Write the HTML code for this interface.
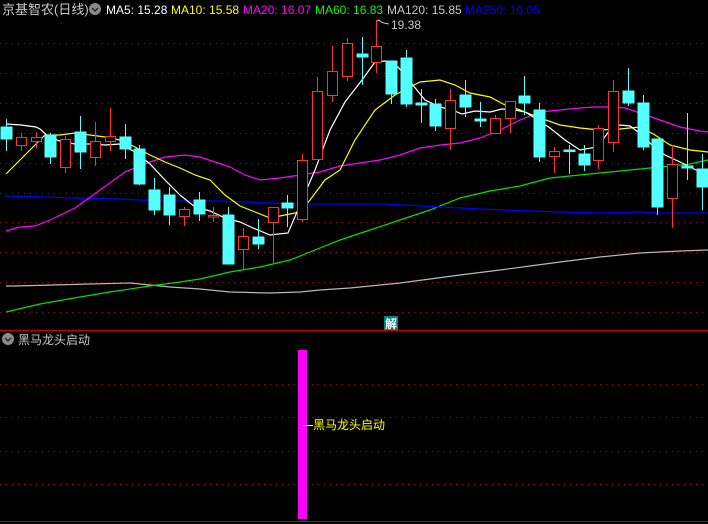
<!DOCTYPE html>
<html><head><meta charset="utf-8"><style>
html,body{margin:0;padding:0;background:#000;width:708px;height:524px;overflow:hidden}
svg{display:block}
text{font-family:"Liberation Sans","Noto Sans CJK SC",sans-serif}
</style></head><body>
<svg width="708" height="524" viewBox="0 0 708 524" xmlns="http://www.w3.org/2000/svg">
<rect width="708" height="524" fill="#000"/>
<g stroke="#8a1a1a" stroke-width="1" stroke-dasharray="1,5">
<line x1="0" y1="43.5" x2="708" y2="43.5"/><line x1="0" y1="73.5" x2="708" y2="73.5"/>
<line x1="0" y1="103.5" x2="708" y2="103.5"/><line x1="0" y1="133.5" x2="708" y2="133.5"/>
<line x1="0" y1="163.5" x2="708" y2="163.5"/><line x1="0" y1="193.5" x2="708" y2="193.5"/>
<line x1="0" y1="222.5" x2="708" y2="222.5"/><line x1="0" y1="252.5" x2="708" y2="252.5"/>
<line x1="0" y1="282.5" x2="708" y2="282.5"/><line x1="0" y1="312.5" x2="708" y2="312.5"/>
<line x1="0" y1="384.5" x2="708" y2="384.5"/><line x1="0" y1="417.5" x2="708" y2="417.5"/>
<line x1="0" y1="451.5" x2="708" y2="451.5"/><line x1="0" y1="484.5" x2="708" y2="484.5"/>
</g>
<line x1="0" y1="330.5" x2="708" y2="330.5" stroke="#c00000" stroke-width="1.5"/>
<line x1="0" y1="521.5" x2="708" y2="521.5" stroke="#c00000" stroke-width="1"/>

<g fill="none" stroke-width="1.2">
<polyline stroke="#b8b8b8" points="6,286 15,286 90,284 130,283 150,285 170,287 200,289 230,292 270,293 300,292 320,290 350,288 380,285 400,283 430,279 460,275 500,270 530,266 560,262 600,257 640,253 680,251 708,250"/>
<polyline stroke="#00e000" points="6,312 40,304 80,297 110,292 150,286 180,282 200,279 230,272 260,267 290,260 310,252 340,240 370,230 400,220 430,210 460,198 490,191 520,186 550,178 580,175 600,173 630,170 660,167 690,164 708,160"/>
<polyline stroke="#0000ff" points="6,196 45,197 75,198 120,199 160,201 220,201 270,203 300,204 385,204 440,207 480,209 530,211 560,212 600,213 640,212 660,213 708,213"/>
<polyline stroke="#ff00ff" points="6,231 20,227 35,226 50,220 75,208 100,190 125,172 150,162 165,157 185,155 200,157 215,162 230,167 245,175 260,180 280,178 300,175 320,172 340,166 360,163 380,160 400,155 420,148 440,145 460,143 480,138 500,130 520,120 540,112 560,110 580,108 595,107 610,107 625,108 640,113 660,120 680,127 700,131 708,132"/>
<polyline stroke="#ffff00" points="6,174 20,160 35,145 45,135 60,135 75,133 90,135 105,137 120,140 135,147 150,155 165,162 180,168 195,175 210,180 225,195 240,206 255,212 270,218 285,215 300,212 310,200 325,180 340,170 355,140 375,110 395,95 410,87 420,82 440,80 455,85 470,93 490,97 505,105 520,110 540,118 560,125 580,128 600,130 620,129 640,127 655,135 670,145 690,150 708,152"/>
<polyline stroke="#ffffff" points="6,124 21,125 36,127 40,129 50,138 60,141 75,144 90,144 105,145 120,144 135,152 150,164 165,180 180,195 195,207 210,211 225,218 240,222 253,228 270,235 288,233 300,205 315,170 330,130 345,102 362,80 375,62 385,61 398,67 412,84 425,100 440,107 452,110 462,114 475,111 490,112 502,109 515,110 525,112 535,118 550,128 565,140 580,150 597,147 610,130 620,125 630,126 642,135 655,148 665,155 680,162 700,172 708,175"/>
</g>

<g stroke-width="1">
<g stroke="#54ffff" fill="#54ffff">
<line x1="6.5" y1="119" x2="6.5" y2="151"/><rect x="1" y="127" width="11" height="12"/>
<line x1="50.5" y1="133" x2="50.5" y2="164"/><rect x="45" y="135" width="11" height="22"/>
<line x1="80.5" y1="116" x2="80.5" y2="169"/><rect x="75" y="132" width="11" height="20"/>
<line x1="125.5" y1="124" x2="125.5" y2="159"/><rect x="120" y="137" width="11" height="12"/>
<line x1="139.5" y1="145" x2="139.5" y2="185"/><rect x="134" y="149" width="11" height="35"/>
<line x1="154.5" y1="178" x2="154.5" y2="215"/><rect x="149" y="190" width="11" height="20"/>
<line x1="169.5" y1="187" x2="169.5" y2="225"/><rect x="164" y="195" width="11" height="20"/>
<line x1="199.5" y1="192" x2="199.5" y2="221"/><rect x="194" y="200" width="11" height="14"/>
<line x1="228.5" y1="207" x2="228.5" y2="264"/><rect x="223" y="215" width="11" height="49"/>
<line x1="258.5" y1="219" x2="258.5" y2="249"/><rect x="253" y="237" width="11" height="7"/>
<line x1="287.5" y1="195" x2="287.5" y2="227"/><rect x="282" y="203" width="11" height="5"/>
<line x1="362.5" y1="37" x2="362.5" y2="85"/><rect x="357" y="54" width="11" height="3"/>
<line x1="391.5" y1="61" x2="391.5" y2="104"/><rect x="386" y="61" width="11" height="33"/>
<line x1="406.5" y1="50" x2="406.5" y2="107"/><rect x="401" y="58" width="11" height="46"/>
<line x1="421.5" y1="89" x2="421.5" y2="123"/><rect x="416" y="103" width="11" height="2"/>
<line x1="435.5" y1="99" x2="435.5" y2="131"/><rect x="430" y="104" width="11" height="22"/>
<line x1="465.5" y1="80" x2="465.5" y2="117"/><rect x="460" y="95" width="11" height="12"/>
<line x1="480.5" y1="102" x2="480.5" y2="127"/><rect x="475" y="119" width="11" height="2"/>
<line x1="524.5" y1="76" x2="524.5" y2="115"/><rect x="519" y="96" width="11" height="7"/>
<line x1="539.5" y1="103" x2="539.5" y2="162"/><rect x="534" y="110" width="11" height="47"/>
<line x1="569.5" y1="145" x2="569.5" y2="174"/><rect x="564" y="150" width="11" height="1.5"/>
<line x1="584.5" y1="145" x2="584.5" y2="171"/><rect x="579" y="154" width="11" height="11"/>
<line x1="628.5" y1="68" x2="628.5" y2="106"/><rect x="623" y="91" width="11" height="12"/>
<line x1="643.5" y1="95" x2="643.5" y2="150"/><rect x="638" y="103" width="11" height="44"/>
<line x1="657.5" y1="139" x2="657.5" y2="215"/><rect x="652" y="139" width="11" height="68"/>
<line x1="687.5" y1="113" x2="687.5" y2="180"/><rect x="682" y="166" width="11" height="2"/>
<line x1="702.5" y1="154" x2="702.5" y2="210"/><rect x="697" y="169" width="11" height="18"/>
</g>
<g stroke="#ff3232" fill="#000">
<line x1="21.5" y1="133" x2="21.5" y2="151"/><rect x="16.5" y="137.5" width="10" height="8"/>
<line x1="36.5" y1="132" x2="36.5" y2="148"/><rect x="31.5" y="137.5" width="10" height="4"/>
<line x1="65.5" y1="136" x2="65.5" y2="173"/><rect x="60.5" y="139.5" width="10" height="28"/>
<line x1="95.5" y1="122" x2="95.5" y2="166"/><rect x="90.5" y="141.5" width="10" height="16"/>
<line x1="110.5" y1="108" x2="110.5" y2="151"/><rect x="105.5" y="136.5" width="10" height="5"/>
<line x1="184.5" y1="207" x2="184.5" y2="226"/><rect x="179.5" y="209.5" width="10" height="7"/>
<line x1="213.5" y1="207" x2="213.5" y2="222"/><rect x="208.5" y="215.5" width="10" height="1.5"/>
<line x1="243.5" y1="228" x2="243.5" y2="269"/><rect x="238.5" y="236.5" width="10" height="13"/>
<line x1="273.5" y1="207" x2="273.5" y2="264"/><rect x="268.5" y="207.5" width="10" height="15"/>
<line x1="302.5" y1="154" x2="302.5" y2="222"/><rect x="297.5" y="160.5" width="10" height="59"/>
<line x1="317.5" y1="77" x2="317.5" y2="159"/><rect x="312.5" y="91.5" width="10" height="68"/>
<line x1="332.5" y1="46" x2="332.5" y2="102"/><rect x="327.5" y="71.5" width="10" height="24"/>
<line x1="347.5" y1="38" x2="347.5" y2="81"/><rect x="342.5" y="43.5" width="10" height="33"/>
<line x1="376.5" y1="20" x2="376.5" y2="73"/><rect x="371.5" y="46.5" width="10" height="16"/>
<line x1="450.5" y1="89" x2="450.5" y2="150"/><rect x="445.5" y="100.5" width="10" height="28"/>
<line x1="495.5" y1="115" x2="495.5" y2="133"/><rect x="490.5" y="118.5" width="10" height="15"/>
<line x1="510.5" y1="101" x2="510.5" y2="133"/><rect x="505.5" y="101.5" width="10" height="17"/>
<line x1="554.5" y1="147" x2="554.5" y2="173"/><rect x="549.5" y="151.5" width="10" height="5"/>
<line x1="598.5" y1="125" x2="598.5" y2="169"/><rect x="593.5" y="128.5" width="10" height="32"/>
<line x1="613.5" y1="80" x2="613.5" y2="152"/><rect x="608.5" y="91.5" width="10" height="51"/>
<line x1="672.5" y1="145" x2="672.5" y2="228"/><rect x="667.5" y="164.5" width="10" height="34"/>
</g>
</g>

<text x="2" y="14" font-size="13" fill="#c8c8c8">京基智农(日线)</text>
<circle cx="95" cy="9" r="6" fill="#8a8a8a"/>
<polyline points="92,8 95,11 98,8" fill="none" stroke="#222" stroke-width="1.4"/>
<text x="106" y="14" font-size="12" fill="#ffffff">MA5: 15.28</text>
<text x="171" y="14" font-size="12" fill="#ffff00">MA10: 15.58</text>
<text x="243" y="14" font-size="12" fill="#ff00ff">MA20: 16.07</text>
<text x="315" y="14" font-size="12" fill="#00ff00">MA60: 16.83</text>
<text x="387" y="14" font-size="12" fill="#c8c8c8">MA120: 15.85</text>
<text x="465" y="14" font-size="12" fill="#0000ff">MA250: 16.05</text>
<polyline points="377,21 379,20 381,22 384,23 389,24" fill="none" stroke="#c8c8c8" stroke-width="1"/>
<text x="391" y="29" font-size="12" fill="#c8c8c8">19.38</text>

<rect x="384" y="316" width="14" height="14" fill="#008080"/>
<text x="385" y="328" font-size="12" fill="#fff" font-weight="bold">解</text>

<circle cx="8" cy="339" r="6" fill="#8a8a8a"/>
<polyline points="5,338 8,341 11,338" fill="none" stroke="#222" stroke-width="1.4"/>
<text x="18" y="344" font-size="12" fill="#c8c8c8">黑马龙头启动</text>
<rect x="298" y="350" width="9" height="169" fill="#ff00ff"/>
<line x1="303" y1="425.5" x2="313" y2="425.5" stroke="#ffff00" stroke-width="1"/>
<text x="313" y="429" font-size="12" fill="#ffff00">黑马龙头启动</text>
</svg>
</body></html>
